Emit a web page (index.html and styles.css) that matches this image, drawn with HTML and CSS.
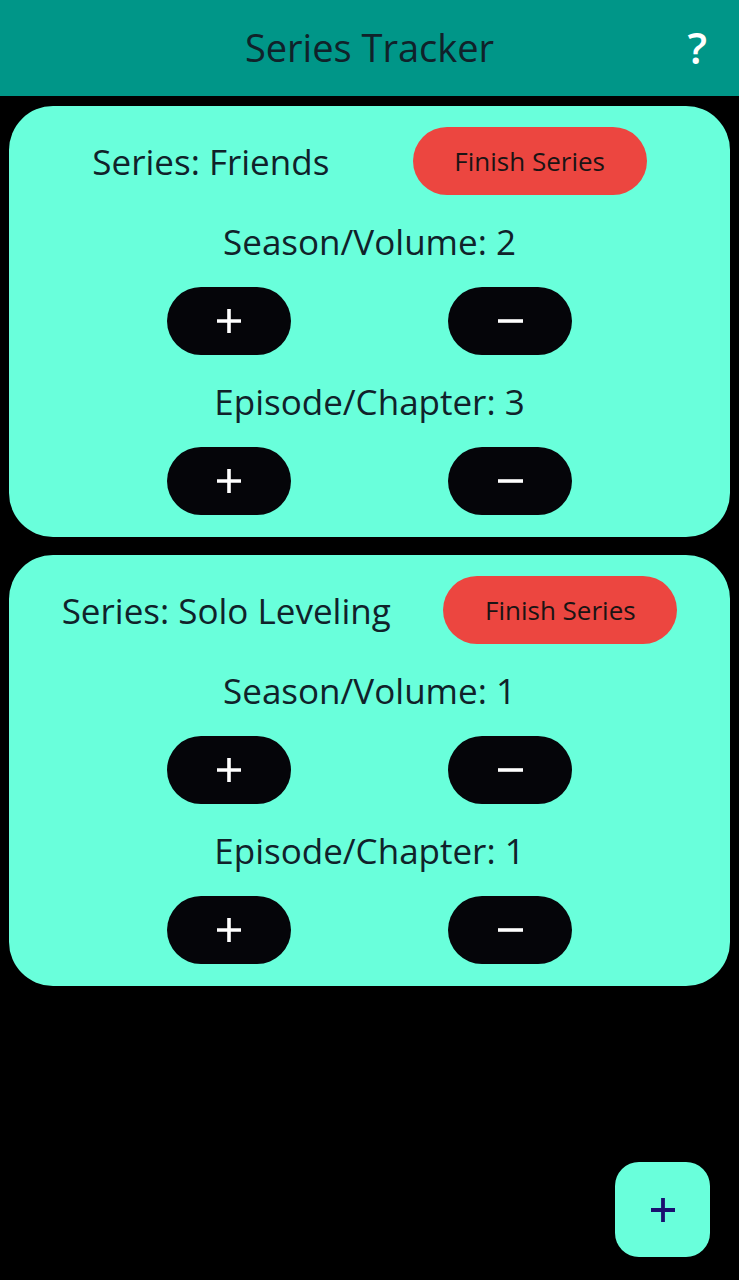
FILE: index.html
```html
<!DOCTYPE html>
<html>
<head>
<meta charset="utf-8">
<link rel="stylesheet" href="styles.css">
</head>
<body>
<header class="bar">
  <h1 class="title">Series Tracker</h1>
  <span class="help">?</span>
</header>
<main class="list">
  <section class="card">
    <div class="top">
      <span class="name">Series: Friends</span>
      <button class="finish">Finish Series</button>
    </div>
    <div class="label">Season/Volume: 2</div>
    <div class="row">
      <button class="pill" aria-label="plus"><svg class="ico" viewBox="0 0 24 24"><path d="M12 0V24M0 12H24"/></svg></button>
      <button class="pill" aria-label="minus"><svg class="ico" viewBox="0 0 24 24"><path d="M0 12H25"/></svg></button>
    </div>
    <div class="label">Episode/Chapter: 3</div>
    <div class="row">
      <button class="pill" aria-label="plus"><svg class="ico" viewBox="0 0 24 24"><path d="M12 0V24M0 12H24"/></svg></button>
      <button class="pill" aria-label="minus"><svg class="ico" viewBox="0 0 24 24"><path d="M0 12H25"/></svg></button>
    </div>
  </section>
  <section class="card">
    <div class="top">
      <span class="name">Series: Solo Leveling</span>
      <button class="finish">Finish Series</button>
    </div>
    <div class="label">Season/Volume: 1</div>
    <div class="row">
      <button class="pill" aria-label="plus"><svg class="ico" viewBox="0 0 24 24"><path d="M12 0V24M0 12H24"/></svg></button>
      <button class="pill" aria-label="minus"><svg class="ico" viewBox="0 0 24 24"><path d="M0 12H25"/></svg></button>
    </div>
    <div class="label">Episode/Chapter: 1</div>
    <div class="row">
      <button class="pill" aria-label="plus"><svg class="ico" viewBox="0 0 24 24"><path d="M12 0V24M0 12H24"/></svg></button>
      <button class="pill" aria-label="minus"><svg class="ico" viewBox="0 0 24 24"><path d="M0 12H25"/></svg></button>
    </div>
  </section>
</main>
<button class="fab" aria-label="add"><svg class="ico fab-ico" viewBox="0 0 24 24"><path d="M12 0V24M0 12H24"/></svg></button>
</body>
</html>
```
FILE: styles.css
```css
html, body {
  margin: 0;
  padding: 0;
  background: #000;
  height: 100%;
  font-family: "Open Sans", "Noto Sans", sans-serif;
}
.bar {
  height: 96px;
  background: #009688;
  display: flex;
  align-items: center;
  justify-content: center;
  position: relative;
}
.title {
  margin: 0 0 2px;
  font-weight: 400;
  font-size: 38px;
  color: #10222a;
  line-height: 1;
}
.help {
  position: absolute;
  right: 32px;
  top: 20px;
  color: #fff;
  font-size: 43px;
  font-weight: 600;
  line-height: 1.3;
}
.list {
  display: flex;
  flex-direction: column;
  gap: 18px;
  padding: 10px 9px 0;
}
.card {
  background: #69ffdb;
  border-radius: 44px;
  padding: 21px 0 22px;
  display: flex;
  flex-direction: column;
}
.top {
  display: flex;
  justify-content: space-evenly;
  align-items: center;
}
.name {
  font-size: 35px;
  color: #10222a;
}
.finish {
  width: 234px;
  height: 68px;
  border: none;
  border-radius: 34px;
  background: #ec4640;
  font-family: inherit;
  font-size: 26px;
  color: #1a1414;
  padding: 0;
}
.label {
  text-align: center;
  font-size: 35px;
  color: #10222a;
  margin-top: 24px;
  line-height: 46px;
}
.row {
  display: flex;
  justify-content: space-evenly;
  margin-top: 22px;
}
.pill {
  width: 124px;
  height: 68px;
  border: none;
  border-radius: 34px;
  background: #050509;
  padding: 0;
  display: flex;
  align-items: center;
  justify-content: center;
}
.ico {
  width: 24px;
  height: 24px;
  fill: none;
  stroke: #fff;
  stroke-width: 3.6;
  overflow: visible;
}
.fab {
  position: fixed;
  right: 29px;
  bottom: 23px;
  width: 95px;
  height: 95px;
  border: none;
  border-radius: 24px;
  background: #69ffdb;
  padding: 0;
  display: flex;
  align-items: center;
  justify-content: center;
}
.fab-ico {
  stroke: #1a1070;
  stroke-width: 3.8;
}
```
